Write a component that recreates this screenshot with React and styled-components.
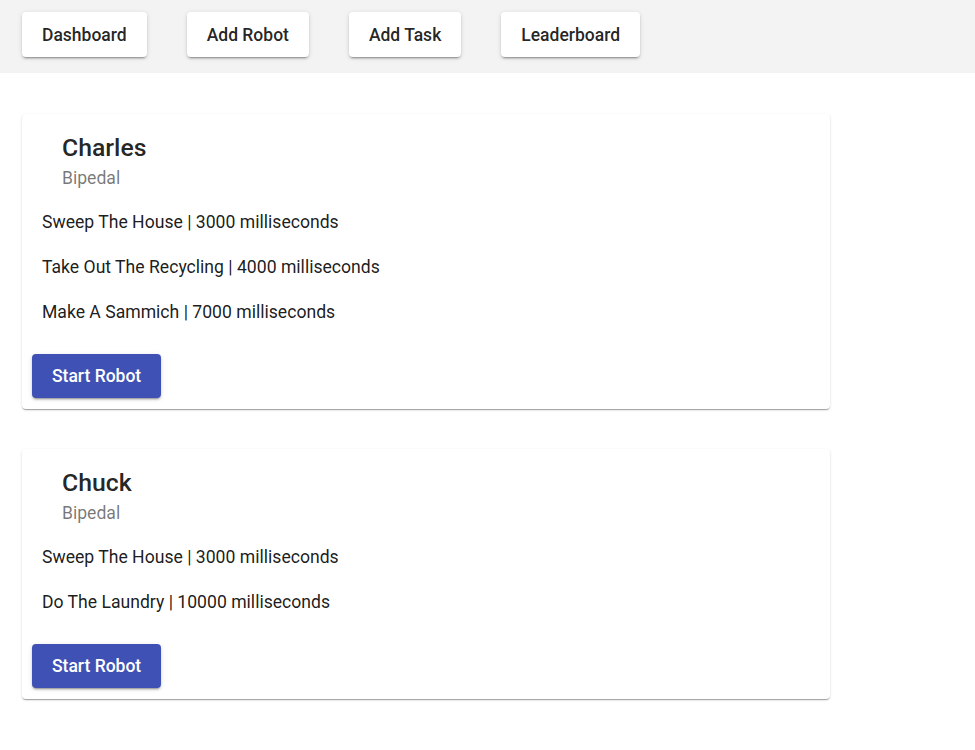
import React from 'react'
import styled, { createGlobalStyle } from 'styled-components'

const GlobalStyle = createGlobalStyle`
  body {
    margin: 0;
    background: #ffffff;
    font-family: Roboto, "Liberation Sans", sans-serif;
    color: rgba(0, 0, 0, 0.87);
  }
`

const robots = [
  {
    name: 'Charles',
    type: 'Bipedal',
    tasks: [
      { description: 'Sweep The House', eta: 3000 },
      { description: 'Take Out The Recycling', eta: 4000 },
      { description: 'Make A Sammich', eta: 7000 },
    ],
  },
  {
    name: 'Chuck',
    type: 'Bipedal',
    tasks: [
      { description: 'Sweep The House', eta: 3000 },
      { description: 'Do The Laundry', eta: 10000 },
    ],
  },
]

const App = () => {
  return (
    <>
      <GlobalStyle />
      <NavBar>
        <NavButton>Dashboard</NavButton>
        <NavButton>Add Robot</NavButton>
        <NavButton>Add Task</NavButton>
        <NavButton>Leaderboard</NavButton>
      </NavBar>
      <Main>
        {robots.map(robot => (
          <RobotCard key={robot.name}>
            <CardHeader>
              <Title>{robot.name}</Title>
              <Subtitle>{robot.type}</Subtitle>
            </CardHeader>
            <TaskList>
              {robot.tasks.map(task => (
                <Task key={task.description}>
                  {task.description} | {task.eta} milliseconds
                </Task>
              ))}
            </TaskList>
            <CardActions>
              <StartButton>Start Robot</StartButton>
            </CardActions>
          </RobotCard>
        ))}
      </Main>
    </>
  )
}

const NavBar = styled.nav`
  display: flex;
  gap: 40px;
  background: #f3f3f3;
  padding: 12px 22px 16px;
`

const NavButton = styled.button`
  height: 45px;
  padding: 0 20px;
  border: none;
  border-radius: 4px;
  background: #ffffff;
  color: rgba(0, 0, 0, 0.87);
  font-family: Roboto, "Liberation Sans", sans-serif;
  font-size: 17.5px;
  font-weight: 500;
  cursor: pointer;
  box-shadow: 0px 3px 1px -2px rgba(0,0,0,0.2), 0px 2px 2px 0px rgba(0,0,0,0.14), 0px 1px 5px 0px rgba(0,0,0,0.12);
`

const Main = styled.main`
  display: flex;
  flex-direction: column;
  gap: 40px;
  padding: 41px 22px 40px;
`

const RobotCard = styled.section`
  width: 808px;
  background: #ffffff;
  border-radius: 4px;
  box-shadow: 0px 2px 1px -1px rgba(0,0,0,0.2), 0px 1px 1px 0px rgba(0,0,0,0.14), 0px 1px 3px 0px rgba(0,0,0,0.12);
  padding-bottom: 11px;
`

const CardHeader = styled.div`
  display: flex;
  flex-direction: column;
  gap: 4px;
  padding: 20px 40px 0;
`

const Title = styled.h2`
  margin: 0;
  font-size: 24.8px;
  line-height: 28px;
  font-weight: 500;
  color: rgba(0, 0, 0, 0.87);
`

const Subtitle = styled.span`
  font-size: 17.6px;
  line-height: 24px;
  color: rgba(0, 0, 0, 0.54);
`

const TaskList = styled.div`
  display: flex;
  flex-direction: column;
  gap: 20px;
  padding: 20px 20px 0;
`

const Task = styled.p`
  margin: 0;
  font-size: 17.6px;
  line-height: 25px;
  color: rgba(0, 0, 0, 0.9);
`

const CardActions = styled.div`
  display: flex;
  padding: 29px 10px 0;
`

const StartButton = styled.button`
  height: 44px;
  padding: 0 20px;
  border: none;
  border-radius: 4px;
  background: #3f51b5;
  color: #ffffff;
  font-family: Roboto, "Liberation Sans", sans-serif;
  font-size: 17.5px;
  font-weight: 500;
  cursor: pointer;
  box-shadow: 0px 3px 1px -2px rgba(0,0,0,0.2), 0px 2px 2px 0px rgba(0,0,0,0.14), 0px 1px 5px 0px rgba(0,0,0,0.12);
`

export default App
